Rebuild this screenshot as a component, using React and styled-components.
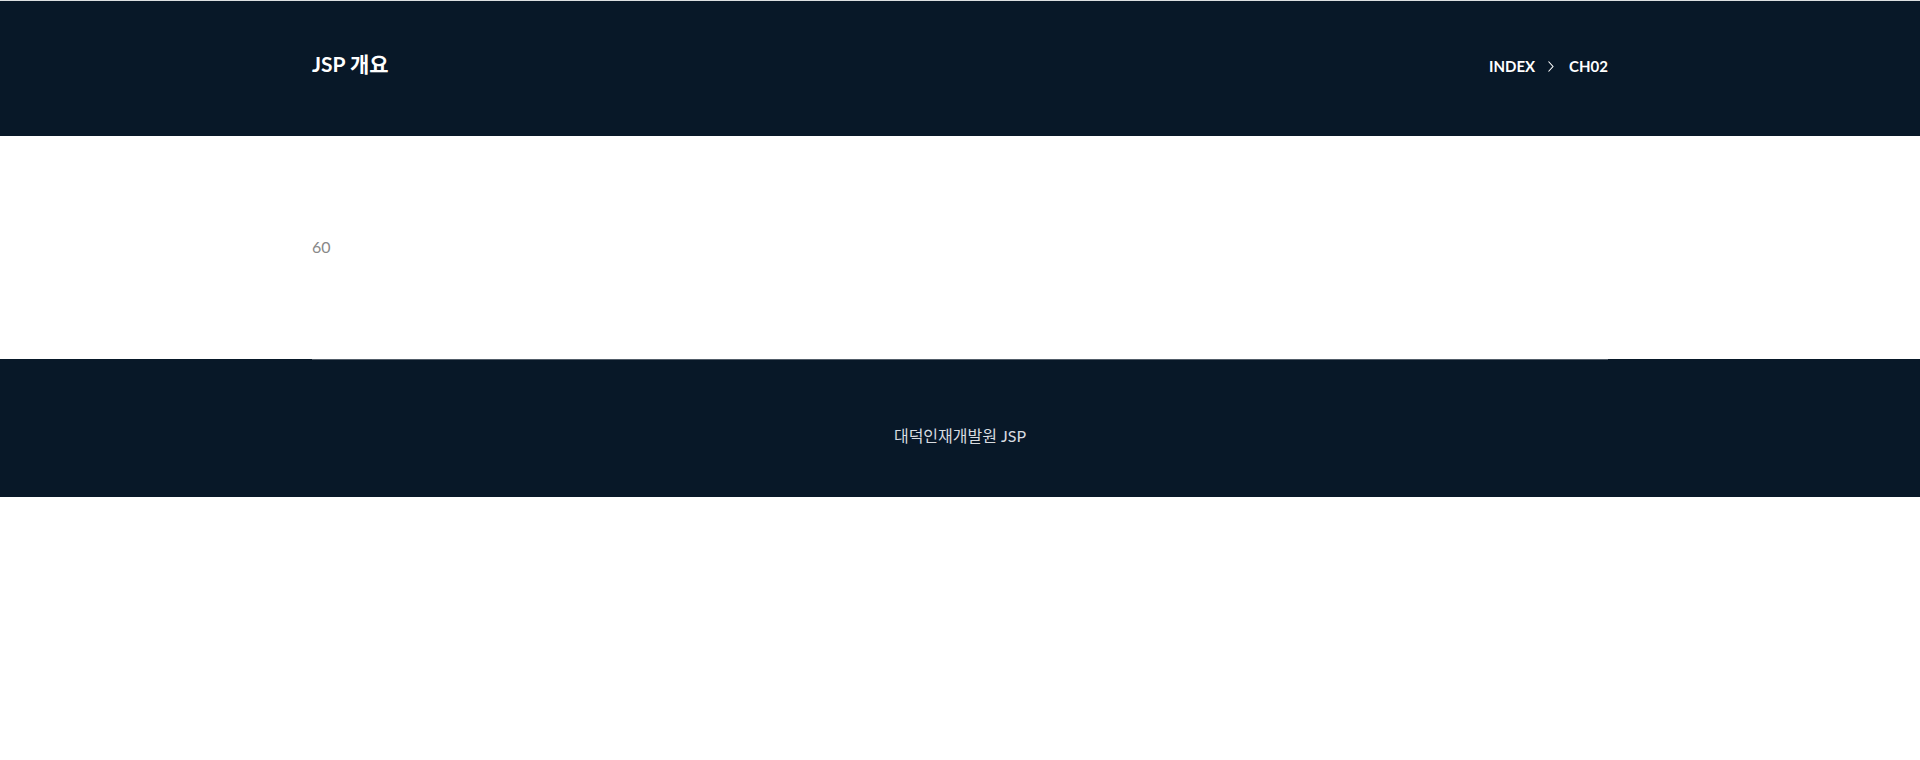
import React from 'react';
import styled, { createGlobalStyle } from 'styled-components';

const GlobalStyle = createGlobalStyle`
  *, *::before, *::after { box-sizing: border-box; }
  body {
    margin: 0;
    background: #fff;
    color: #888;
    font-family: Lato, "Noto Sans CJK KR", sans-serif;
    font-size: 16px;
    line-height: 24px;
  }
`;

const Container = styled.div`
  width: 100%;
  max-width: 1320px;
  margin: 0 auto;
  padding: 0 12px;
`;

const Header = styled.header`
  padding: 47px 0 56px;
  border-top: 1px solid #dcdfe1;
  background: #081828;
`;

const HeaderRow = styled(Container)`
  display: flex;
  align-items: flex-end;
  justify-content: space-between;
`;

const Title = styled.h1`
  margin: 0;
  color: #fff;
  font-size: 21px;
  font-weight: 700;
  line-height: 32px;
`;

const Breadcrumb = styled.ol`
  display: flex;
  align-items: center;
  gap: 12px;
  margin: 0;
  padding: 0 0 2px;
  list-style: none;
  color: #fff;
  font-size: 15px;
`;

const Crumb = styled.li`
  display: flex;
  align-items: center;
  gap: 12px;
  font-weight: 700;
`;

const CrumbLink = styled.a`
  color: #fff;
  text-decoration: none;
`;

const Content = styled.main`
  padding: 99px 0 100px;
`;

const Footer = styled.footer`
  background: #081828;
  color: #d8dce0;
  text-align: center;
`;

const FooterInner = styled.div`
  padding: 64px 0 49px;
  border-top: 1px solid #525d69;
`;

const Chevron = () => (
  <svg width="10" height="12" viewBox="0 0 10 12" fill="none" aria-hidden="true">
    <path d="M1.5 1.5 6 6.5 1.5 11.5" stroke="#fff" strokeWidth="1.1" />
  </svg>
);

export default function App() {
  return (
    <>
      <GlobalStyle />
      <Header>
        <HeaderRow>
          <Title>JSP 개요</Title>
          <nav aria-label="breadcrumb">
            <Breadcrumb>
              <Crumb><CrumbLink href="#">INDEX</CrumbLink></Crumb>
              <Crumb aria-current="page"><Chevron />CH02</Crumb>
            </Breadcrumb>
          </nav>
        </HeaderRow>
      </Header>
      <Content>
        <Container>60</Container>
      </Content>
      <Footer>
        <Container>
          <FooterInner>대덕인재개발원 JSP</FooterInner>
        </Container>
      </Footer>
    </>
  );
}
